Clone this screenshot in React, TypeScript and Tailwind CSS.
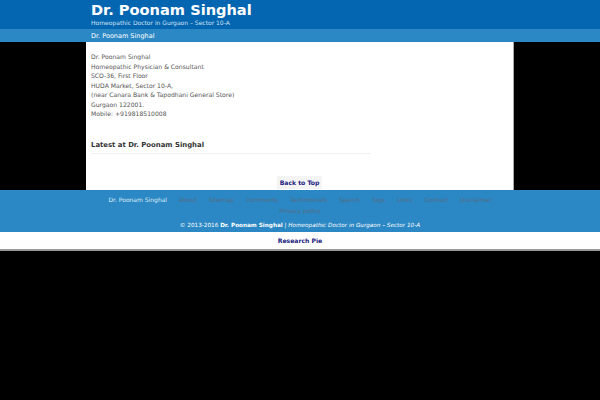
export default function App() {
  const links = ["About", "Sitemap", "Comments", "Testimonials", "Search", "Tags", "Links", "Contact", "Disclaimer"];
  return (
    <div className="min-h-screen bg-black font-['DejaVu_Sans',sans-serif]">
      <header className="bg-[#0465b0]">
        <div className="mx-auto w-[428px] px-[5px] pt-[1px] h-[29px]">
          <h1 className="text-[14.6px] leading-[18px] font-bold text-white">Dr. Poonam Singhal</h1>
          <div className="text-[6px] leading-[7px] text-[#cfe3f5]">Homeopathic Doctor in Gurgaon – Sector 10-A</div>
        </div>
      </header>
      <nav className="bg-[#2b88c4] h-[13px]">
        <div className="mx-auto w-[428px] px-[5px] text-[6.5px] leading-[14px] text-white">Dr. Poonam Singhal</div>
      </nav>
      <main className="mx-auto w-[428px] bg-white border-r border-[#aaaaaa] px-[5px] pt-[10px] h-[148px] flex flex-col">
        <div className="text-[6.1px] leading-[9.5px] text-[#555555]">
          <p>Dr. Poonam Singhal</p>
          <p>Homeopathic Physician &amp; Consultant</p>
          <p>SCO-36, First Floor</p>
          <p>HUDA Market, Sector 10-A,</p>
          <p>(near Canara Bank &amp; Tapodhani General Store)</p>
          <p>Gurgaon 122001.</p>
          <p>Mobile: +919818510008</p>
        </div>
        <h2 className="mt-[21px] text-[6.9px] leading-[10px] font-bold text-[#333333]">Latest at Dr. Poonam Singhal</h2>
        <div className="mt-[3px] w-[280px] border-t border-[#f0f0f0]" />
        <div className="mt-auto mb-[1px] flex justify-center">
          <span className="bg-[#f4f4f4] px-[3px] text-[6.1px] leading-[13px] font-bold text-[#1a1a80]">Back to Top</span>
        </div>
      </main>
      <footer className="bg-[#2b88c4] h-[42px] pt-[4px] text-center">
        <div className="mx-auto w-[400px] flex flex-wrap justify-center gap-x-[12px] text-[6px] leading-[11px]">
          <span className="text-[#dcecf8]">Dr. Poonam Singhal</span>
          {links.map((l) => (
            <span key={l} className="text-[#556a82]">{l}</span>
          ))}
          <span className="text-[#556a82]">Privacy policy</span>
        </div>
        <div className="mt-[5px] text-[5.7px] leading-[9px] text-white">
          © 2013-2016 <b>Dr. Poonam Singhal</b> | <i>Homeopathic Doctor in Gurgaon – Sector 10-A</i>
        </div>
      </footer>
      <div className="bg-white h-[19px] border-b-2 border-[#999999] flex items-center justify-center">
        <span className="text-[6.1px] font-bold text-[#1a1a80]">Research Pie</span>
      </div>
    </div>
  );
}
